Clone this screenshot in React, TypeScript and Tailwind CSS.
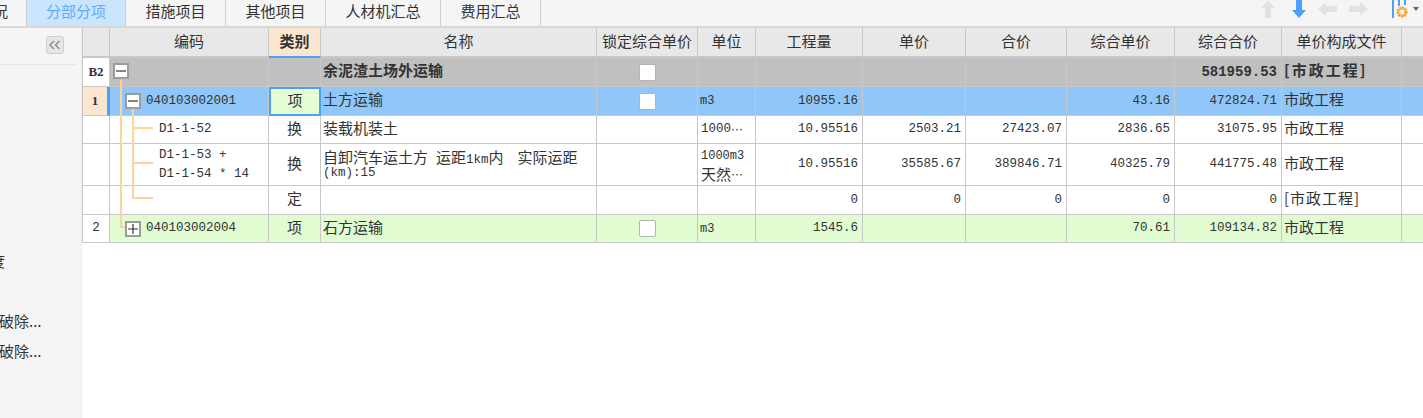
import React from 'react'

const mono = "font-['Liberation_Mono',monospace] text-[12.5px]"
const cjk = "font-['Noto_Sans_CJK_SC','Liberation_Sans',sans-serif] text-[15px]"

const tabs = [
  { label: '措施项目', w: 'w-[100px]' },
  { label: '其他项目', w: 'w-[100px]' },
  { label: '人材机汇总', w: 'w-[115px]' },
  { label: '费用汇总', w: 'w-[100px]' },
]

const headers = ['', '编码', '类别', '名称', '锁定综合单价', '单位', '工程量', '单价', '合价', '综合单价', '综合合价', '单价构成文件', '']

interface CellProps {
  children?: React.ReactNode
  className?: string
}

function Cell({ children, className = '' }: CellProps) {
  return <div className={`flex items-center overflow-hidden border-r border-b border-[#c8c8c8] ${className}`}>{children}</div>
}

function Check() {
  return <div className="mx-auto h-[17px] w-[17px] rounded-[2px] border border-[#b4b4b4] bg-white" />
}

function Toggle({ open }: { open: boolean }) {
  return (
    <div className="relative z-10 flex h-[16px] w-[16px] items-center justify-center border-2 border-[#9c9c9c] bg-white">
      <svg width="10" height="10" viewBox="0 0 10 10">
        <path d={open ? 'M0 5h10' : 'M0 5h10M5 0v10'} stroke="#333" strokeWidth="1.2" />
      </svg>
    </div>
  )
}

const num = `justify-end pr-[4px] ${mono}`
const txt = `pl-[2px] pb-[3px] ${cjk}`
const center = `justify-center pb-[3px] ${cjk}`
const dots = "font-['Noto_Sans_CJK_SC',sans-serif] text-[12px]"

interface RowData {
  bg: string
  no: React.ReactNode
  noClass: string
  code: React.ReactNode
  type: string
  typeClass?: string
  name: React.ReactNode
  lock: boolean
  unit: React.ReactNode
  qty?: string
  price?: string
  total?: string
  cprice?: string
  ctotal?: string
  file: string
  fileClass?: string
  bold?: boolean
}

const rows: RowData[] = [
  {
    bg: 'bg-[#c0c0c0]',
    no: 'B2',
    noClass: "bg-white font-['Liberation_Serif',serif] text-[13px] font-bold",
    code: (
      <div className="-mt-[2px] pl-[3px]">
        <Toggle open />
      </div>
    ),
    type: '',
    name: '余泥渣土场外运输',
    lock: true,
    unit: '',
    ctotal: '581959.53',
    file: '[市政工程]',
    fileClass: 'tracking-[2px]',
    bold: true,
  },
  {
    bg: 'bg-[#90c7f8]',
    no: '1',
    noClass: "border-r-[3px] border-r-[#4d9ffa] bg-[#fde6cf] font-['Liberation_Serif',serif] text-[13px] font-bold",
    code: (
      <div className="flex items-center gap-[5px] pl-[15px]">
        <Toggle open />
        <span className={mono}>040103002001</span>
      </div>
    ),
    type: '项',
    typeClass: 'border-2! border-[#4d9ffa]! bg-[#e3fdd4]',
    name: '土方运输',
    lock: true,
    unit: <span className="pl-[2px] font-['Liberation_Mono',monospace] text-[12px]">m3</span>,
    qty: '10955.16',
    cprice: '43.16',
    ctotal: '472824.71',
    file: '市政工程',
  },
  {
    bg: 'bg-white',
    no: '',
    noClass: 'bg-white',
    code: <span className={`pl-[49px] ${mono}`}>D1-1-52</span>,
    type: '换',
    name: '装载机装土',
    lock: false,
    unit: (
      <span className={`flex items-center pl-[3px] ${mono}`}>
        1000<span className={dots}>⋯</span>
      </span>
    ),
    qty: '10.95516',
    price: '2503.21',
    total: '27423.07',
    cprice: '2836.65',
    ctotal: '31075.95',
    file: '市政工程',
  },
  {
    bg: 'bg-white',
    no: '',
    noClass: 'bg-white',
    code: (
      <span className={`whitespace-pre pl-[49px] leading-[19px] ${mono}`}>
        {'D1-1-53 +\nD1-1-54 * 14'}
      </span>
    ),
    type: '换',
    name: (
      <div className="mt-[3px] flex flex-col">
        <div className="flex h-[17px] items-baseline leading-[17px] whitespace-nowrap">
          <span>自卸汽车运土方</span>
          <span className="ml-[8px]">运距</span>
          <span className="font-['Liberation_Mono',monospace] text-[12.5px]">1km</span>
          <span>内</span>
          <span className="ml-[14px]">实际运距</span>
        </div>
        <div className="flex h-[17px] items-center font-['Liberation_Mono',monospace] text-[12.5px]">(km):15</div>
      </div>
    ),
    lock: false,
    unit: (
      <span className="pl-[3px] pb-[2px] leading-[17px]">
        <span className="font-['Liberation_Mono',monospace] text-[12px]">1000m3</span>
        <br />
        天然<span className={dots}>⋯</span>
      </span>
    ),
    qty: '10.95516',
    price: '35585.67',
    total: '389846.71',
    cprice: '40325.79',
    ctotal: '441775.48',
    file: '市政工程',
  },
  {
    bg: 'bg-white',
    no: '',
    noClass: 'bg-white',
    code: '',
    type: '定',
    name: '',
    lock: false,
    unit: '',
    qty: '0',
    price: '0',
    total: '0',
    cprice: '0',
    ctotal: '0',
    file: '[市政工程]',
    fileClass: 'tracking-[1px]',
  },
  {
    bg: 'bg-[#e2fcd2]',
    no: '2',
    noClass: `bg-white ${mono}`,
    code: (
      <div className="flex items-center gap-[5px] pl-[15px]">
        <Toggle open={false} />
        <span className={mono}>040103002004</span>
      </div>
    ),
    type: '项',
    name: '石方运输',
    lock: true,
    unit: <span className="pl-[2px] font-['Liberation_Mono',monospace] text-[12px]">m3</span>,
    qty: '1545.6',
    cprice: '70.61',
    ctotal: '109134.82',
    file: '市政工程',
  },
]

function Row({ r }: { r: RowData }) {
  const boldCls = r.bold ? 'font-bold' : ''
  return (
    <>
      <Cell className={`justify-center ${r.noClass}`}>{r.no}</Cell>
      <Cell className={r.bg}>{r.code}</Cell>
      <Cell className={`${center} ${r.typeClass ?? r.bg}`}>{r.type}</Cell>
      <Cell className={`${txt} ${boldCls} ${r.bg}`}>{r.name}</Cell>
      <Cell className={r.bg}>{r.lock && <Check />}</Cell>
      <Cell className={`${cjk} ${r.bg}`}>{r.unit}</Cell>
      <Cell className={`${num} ${r.bg}`}>{r.qty}</Cell>
      <Cell className={`${num} ${r.bg}`}>{r.price}</Cell>
      <Cell className={`${num} ${r.bg}`}>{r.total}</Cell>
      <Cell className={`${num} ${r.bg}`}>{r.cprice}</Cell>
      <Cell className={`${num} ${r.bold ? 'text-[14px]! font-bold' : ''} ${r.bg}`}>{r.ctotal}</Cell>
      <Cell className={`${txt} ${boldCls} ${r.fileClass ?? ''} ${r.bg}`}>{r.file}</Cell>
      <Cell className={r.bg} />
    </>
  )
}

function ToolIcons() {
  return (
    <div className="ml-auto flex items-start gap-[12px] pr-[2px]">
      <svg width="16" height="18" viewBox="0 0 16 18" className="mr-[3px]">
        <path d="M8 0l7 8h-4v10H5V8H1z" fill="#e2e2e2" />
      </svg>
      <svg width="16" height="18" viewBox="0 0 16 18" className="-mr-[1px]">
        <path d="M5 0h6v10h4l-7 8-7-8h4z" fill="#4d9ffa" />
      </svg>
      <svg width="19" height="14" viewBox="0 0 19 14" className="mt-[2px]">
        <path d="M0 7l8-7v4h11v6H8v4z" fill="#e2e2e2" />
      </svg>
      <svg width="19" height="14" viewBox="0 0 19 14" className="mt-[2px] mr-[11px]">
        <path d="M19 7l-8-7v4H0v6h11v4z" fill="#e2e2e2" />
      </svg>
      <svg width="30" height="19" viewBox="0 0 30 19">
        <path d="M1 0h2v18H1zM7 0h2v6H7zM13 0h2v5h-2z" fill="#4d9ffa" />
        <circle cx="11" cy="12" r="4" fill="none" stroke="#f59a23" strokeWidth="3" strokeDasharray="2 0.6" />
        <circle cx="11" cy="12" r="1.2" fill="#fff" />
        <path d="M22 7h6l-3 4z" fill="#666" />
      </svg>
    </div>
  )
}

function Sidebar() {
  return (
    <div className="flex h-full w-[82px] shrink-0 flex-col overflow-hidden border-r border-[#ececec] bg-[#f5f5f5] font-['Noto_Sans_CJK_SC',sans-serif] text-[15px] text-[#333]">
      <div className="mr-[4px] flex h-[37px] items-start justify-end border-b border-[#e6e6e6] pt-[8px] pr-[13px]">
        <div className="flex h-[18px] w-[18px] items-center justify-center rounded-[3px] border border-[#cfcfcf] bg-[#e6e6e6]">
          <svg width="12" height="10" viewBox="0 0 12 10" fill="none" stroke="#8a8a8a" strokeWidth="1.4">
            <path d="M5 1L1 5l4 4M10.500 1l-4 4 4 4" />
          </svg>
        </div>
      </div>
      <div className="mt-[186px] -ml-[10px] whitespace-nowrap leading-[20px]">度</div>
      <div className="mt-[40px] -ml-[1px] whitespace-nowrap leading-[20px]">破除...</div>
      <div className="mt-[10px] -ml-[1px] whitespace-nowrap leading-[20px]">破除...</div>
    </div>
  )
}

export default function App() {
  return (
    <div className="flex h-[418px] w-[1423px] flex-col overflow-hidden bg-white text-[#333]">
      <div className={`flex h-[28px] shrink-0 border-b-2 border-[#d8d8d8] bg-[#f5f5f5] ${cjk}`}>
        <div className="flex w-[27px] justify-end overflow-hidden border-r border-[#cfcfcf] pr-[18px] whitespace-nowrap">
          工程概况
        </div>
        <div className="flex w-[99px] items-center justify-center border-r border-[#cfcfcf] bg-[#c9e6fe] pb-[4px] text-[#62a9f8]">分部分项</div>
        {tabs.map((t) => (
          <div key={t.label} className={`flex items-center justify-center border-r border-[#cfcfcf] pb-[4px] ${t.w}`}>
            {t.label}
          </div>
        ))}
        <ToolIcons />
      </div>
      <div className="flex min-h-0 flex-1">
        <Sidebar />
        <div className="relative h-[215px] flex-1">
          <div className="grid grid-cols-[27px_159px_52px_276px_101px_58px_107px_103px_101px_108px_107px_120px_22px] grid-rows-[30px_29px_29px_28px_42px_29px_28px] border-l border-[#c8c8c8] text-[#333]">
            {headers.map((h, i) =>
              i === 2 ? (
                <Cell key={i} className={`justify-center border-b-2 border-b-[#4d9ffa] bg-[#fde6cf] pb-[2px] font-bold ${cjk}`}>
                  {h}
                </Cell>
              ) : (
                <Cell key={i} className={`justify-center border-b-2 bg-[#e8e8e8] pb-[2px] ${cjk}`}>
                  {h}
                </Cell>
              ),
            )}
            {rows.map((r, i) => (
              <Row key={i} r={r} />
            ))}
          </div>
          {/* tree connector lines */}
          <div className="absolute top-[52px] left-[38px] h-[148px] w-[5px] border-b-2 border-l-2 border-[#fdd49a]" />
          <div className="absolute top-[79px] left-[50px] h-[22px] w-[21px] border-b-2 border-l-2 border-[#fdd49a]" />
          <div className="absolute top-[101px] left-[50px] h-[35px] w-[21px] border-b-2 border-l-2 border-[#fdd49a]" />
          <div className="absolute top-[136px] left-[50px] h-[35px] w-[21px] border-b-2 border-l-2 border-[#fdd49a]" />
        </div>
      </div>
    </div>
  )
}
